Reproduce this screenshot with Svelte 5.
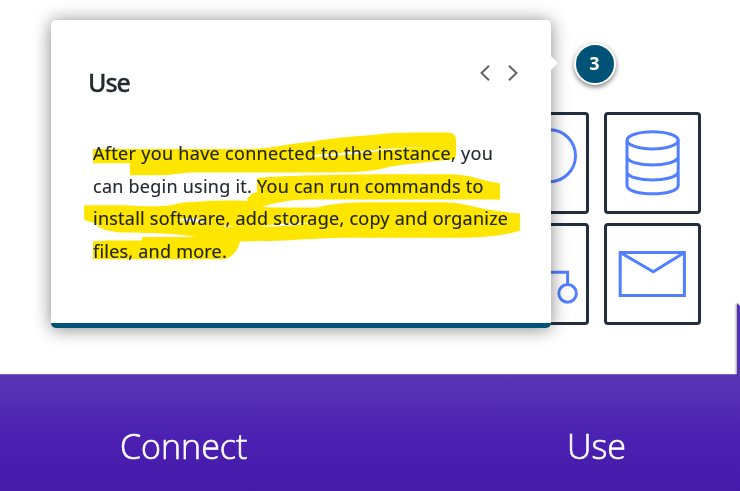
<script>
  const lines = [
    { text: 'After you have connected to the instance, you', spacing: 0.3 },
    { text: 'can begin using it. You can run commands to', spacing: 0.24 },
    { text: 'install software, add storage, copy and organize', spacing: 0.24 },
    { text: 'files, and more.', spacing: 0.22 }
  ];
</script>

<main class="lesson">
  <section class="stage">
    <div class="tiles">
      <div class="tile">
        <svg viewBox="0 0 97 102"><circle cx="57.5" cy="43.8" r="26" /></svg>
      </div>
      <div class="tile">
        <svg viewBox="0 0 97 102">
          <ellipse cx="48.6" cy="28.3" rx="25.6" ry="8.6" />
          <path d="M23 28.3V73.5C23 84.5 74.2 84.5 74.2 73.5V28.3M23 45.3C26 55.5 71 55.5 74.2 45.3M23 60.3C26 70.5 71 70.5 74.2 60.3" />
        </svg>
      </div>
      <div class="tile">
        <svg viewBox="0 0 97 102">
          <path d="M30 49.3H75.6V62" />
          <circle cx="75.6" cy="70.4" r="8.8" />
        </svg>
      </div>
      <div class="tile">
        <svg viewBox="0 0 97 102">
          <path d="M16.2 29.5H80.4V72.5H16.2ZM16.2 29.5L49.3 48.8L80.4 29.5" />
        </svg>
      </div>
    </div>

    <article class="card">
      <header>
        <h2>Use</h2>
        <nav>
          <button aria-label="Previous"><svg viewBox="0 0 10 16"><path d="M9 .7L1.5 8L9 15.3" /></svg></button>
          <button aria-label="Next"><svg viewBox="0 0 10 16"><path d="M1 .7L8.5 8L1 15.3" /></svg></button>
        </nav>
      </header>
      <p>
        {#each lines as line}
          <span style="letter-spacing: {line.spacing}px">{line.text}</span>
        {/each}
      </p>
      <svg class="marker" viewBox="51 20 500 308">
        <path d="M93 149H250C270 149 285 144 310 142C335 137 365 136 385 133.5C405 132 430 132.5 449 132.5Q456 133 456 140V155Q456 159 451 159.5C430 162 400 164 385 168C370 172 355 172 330 172.5H190C180 173 170 175.5 158 175.3H130V163.3H93Z" />
        <path d="M257 178C290 175 350 174 452 174.3C470 175 480 180 500 183.5V199.5H310C290 199.5 275 203 262 206.7L270 207.5H317C335 203 350 202.5 370 202.3H445C470 203 475 210 520 213.5V230.5C500 237 475 238 440 237.8H350C310 238 300 241 240 241.5C238 249 234 257 224 259.3H93V241H104Q108 240 112 240.5H142V237H196C180 234 160 233 120 232.5C104 231 98 228 96 223Q87 222 84 219V205.3H125C160 207.5 170 206 180 203C205 201 225 200 247 201Q247 195 257 192Z" />
        <g class="gap">
          <path d="M313 157C350 156 385 149 427 147.3C395 146.5 350 153 313 155Z" />
          <path d="M176 220Q192 223 208 222Q192 215 176 220ZM224 225.3L236 226.3L224 227ZM260 226.8Q285 227 311 223Q285 222 260 226.8Z" />
        </g>
      </svg>
    </article>
    <span class="caret"></span>
    <span class="badge">3</span>
    <svg class="tip" viewBox="0 0 3 72"><path d="M0 0L3 3V72H0Z" /></svg>
  </section>
  <footer>
    <div class="step connect">Connect</div>
    <div class="step use">Use</div>
  </footer>
</main>

<style>
  :global(body) { margin: 0; background: #fff; }
  .lesson { width: 740px; height: 491px; overflow: hidden; display: flex; flex-direction: column; font-family: "Noto Sans", sans-serif; color: #232b31; }
  .stage { position: relative; flex: 0 0 374px; display: flex; justify-content: flex-end; box-sizing: border-box; padding: 112px 39px 0 0; }
  .tiles { display: grid; grid-template-columns: 97px 97px; grid-template-rows: 102px 102px; gap: 9px 15px; align-content: start; }
  .tile { box-sizing: border-box; border: 3px solid #232f3e; border-radius: 4px; }
  .tile svg { display: block; width: 97px; height: 102px; margin: -3px; fill: none; stroke: #527fff; stroke-width: 3; }
  .card { position: absolute; left: 51px; top: 20px; width: 500px; height: 308px; box-sizing: border-box; background: #fff; border-bottom: 5px solid #005276; border-radius: 5px; box-shadow: 0 1px 18px rgba(0, 0, 0, .48); padding: 36px 33px 0 37px; }
  header { display: flex; justify-content: space-between; align-items: center; height: 52px; }
  h2 { margin: 0; font-size: 25px; line-height: 34px; font-weight: 500; letter-spacing: -1px; -webkit-text-stroke: .3px #232b31; }
  nav { display: flex; gap: 18px; padding-bottom: 18px; }
  button { border: 0; background: none; padding: 0; width: 10px; height: 16px; }
  button svg { display: block; width: 10px; height: 16px; fill: none; stroke: #666; stroke-width: 2; }
  p { margin: 29px 0 0 5px; display: flex; flex-direction: column; align-items: flex-start; font-size: 18px; line-height: 32.6px; white-space: nowrap; -webkit-text-stroke: .15px #232b31; }
  .marker { position: absolute; left: 0; top: 0; width: 500px; height: 308px; fill: #ffe600; mix-blend-mode: multiply; }
  .marker .gap { fill: #fff; }
  .caret { position: absolute; left: 551px; top: 56px; border: solid transparent; border-width: 7.5px 0 7.5px 7.5px; border-left-color: #fff; }
  .badge { position: absolute; left: 573.5px; top: 43px; width: 38px; height: 38px; border: 2px solid #fff; border-radius: 50%; background: #005276; color: #fff; font-size: 18px; line-height: 37px; font-weight: 700; text-align: center; box-shadow: 0 2px 5px rgba(0, 0, 0, .5); }
  .tip { position: absolute; left: 737px; top: 303px; width: 3px; height: 72px; fill: #5433b5; filter: drop-shadow(-1px 0 1px rgba(0, 0, 0, .4)); }
  footer { flex: 1; display: flex; color: #fff; font-family: "Open Sans", sans-serif; font-weight: 300; font-size: 34px; line-height: 48px; padding-top: 47px; border-top: 1px solid #7560bd; background: linear-gradient(#5936b4, #4b20b2 55%, #441aa9); -webkit-text-stroke: .6px #fff; }
  .step { box-sizing: border-box; }
  .connect { width: 448px; padding-left: 120px; }
  .use { padding-left: 119px; }
</style>
